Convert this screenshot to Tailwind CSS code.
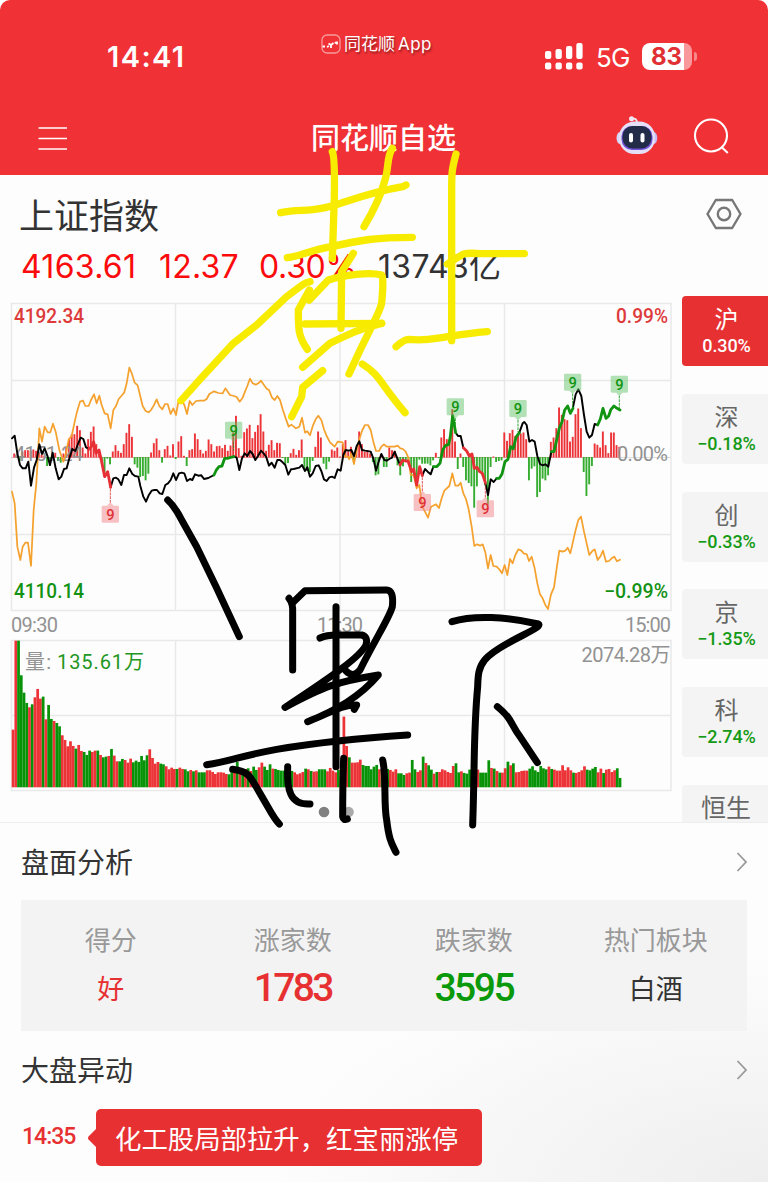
<!DOCTYPE html>
<html lang="zh-CN">
<head>
  <meta charset="UTF-8">
  <meta name="viewport" content="width=device-width, initial-scale=1.0">
  <title>同花顺自选</title>
  <script src="https://cdn.jsdelivr.net/npm/@tailwindcss/browser@4"></script>
</head>
<body class="bg-white font-['Inter','Noto_Sans_CJK_SC',sans-serif] text-[#333]">
  <div class="relative w-[768px] h-[1182px] overflow-hidden bg-[#fdfdfd] flex flex-col rounded-t-[10px]">

    <!-- 顶部 -->
    <header class="h-[175px] shrink-0 bg-[#f03136] text-white flex flex-col">
      <div class="h-[100px] flex items-start">
        <div class="w-[213px] ml-[107px] mt-[39px] text-[29px] leading-9 font-semibold tracking-[1.4px]">14:41</div>
        <div class="flex items-center mt-[32px] h-6 w-[224px]">
          <svg class="w-5 h-5 mr-[3px] ml-px" viewBox="0 0 20 20" fill="none">
            <rect x="1" y="1" width="18" height="18" rx="5" stroke="#f79a9c" stroke-width="1.3"/>
            <path d="M1.500 12.500h2.500M6 13l2-1M7.500 9.500l2.500 1.500L12.500 9M10 11v3M14 9.500l1-1.500M16 7.500v3" stroke="#fff" stroke-width="1.800"/>
          </svg>
          <span class="text-[17px] leading-6 whitespace-nowrap [text-shadow:1px_2px_2px_#0006]">同花顺<span class="ml-[3px] tracking-[0.4px]">App</span></span>
        </div>
        <svg class="w-[39px] h-[27px] mt-[43px]" viewBox="0 0 39 27" fill="#fff">
          <rect x="1" y="8" width="6.300" height="8" rx="2"/><rect x="11.500" y="6" width="6.300" height="10" rx="2"/><rect x="22" y="3" width="6.300" height="13" rx="2"/><rect x="32.300" y="0" width="6.300" height="16" rx="2"/>
          <rect x="1" y="19.500" width="6.300" height="7" rx="2"/><rect x="11.500" y="19.500" width="6.300" height="7" rx="2"/><rect x="22" y="19.500" width="6.300" height="7" rx="2"/><rect x="32.300" y="19.500" width="6.300" height="7" rx="2"/>
        </svg>
        <div class="w-[46px] ml-[13px] mt-[42px] text-[26px] leading-8 tracking-[-0.8px]">5G</div>
        <div class="mt-[43px] w-[50px] h-[27px] rounded-[8px] bg-linear-to-r from-white from-[84%] to-[#f8989a] to-[84%] text-[#e03034] font-bold text-[24px] leading-[27px] pl-[9px] whitespace-nowrap">83</div>
        <div class="w-[3px] h-[9px] mt-[52px] ml-[2px] rounded-r-full bg-[#f8888a]"></div>
      </div>
      <nav class="h-[75px] flex items-start">
        <svg class="w-[30px] h-6 ml-[38px] mt-[27px]" viewBox="0 0 30 24" stroke="#fff" stroke-width="1.700"><path d="M.5 1H29M.5 11.500H29M.5 22H29"/></svg>
        <h1 class="ml-[243px] mt-[17px] w-[304px] text-[29px] leading-[44px] font-medium">同花顺自选</h1>
        <svg class="w-11 h-10 mt-[15px]" viewBox="0 0 44 40">
          <path d="M22 8Q22 2.500 17 4" fill="none" stroke="#eee" stroke-width="1.700"/>
          <circle cx="16.500" cy="3.800" r="2.500" fill="#f4e6f5"/>
          <ellipse cx="5" cy="23" rx="3.500" ry="6" fill="#d3d8fa"/><ellipse cx="38.800" cy="23" rx="3.500" ry="6" fill="#c6bdf7"/>
          <rect x="4" y="6.500" width="36" height="32.500" rx="15.500" fill="#e5e0f8"/>
          <rect x="6.500" y="11" width="31" height="24" rx="10.500" fill="#7252d8"/>
          <rect x="7.500" y="11" width="29" height="22.500" rx="10" fill="#222c49"/>
          <rect x="14" y="18" width="4" height="9.500" rx="2" fill="#fff"/><rect x="25.500" y="18" width="4" height="9.500" rx="2" fill="#fff"/>
        </svg>
        <svg class="w-9 h-9 ml-[34px] mt-[18px]" viewBox="0 0 36 36" fill="none" stroke="#fff" stroke-width="2.100"><circle cx="18" cy="17.500" r="16"/><path d="M28.500 29L34.800 35"/></svg>
      </nav>
    </header>

    <!-- 指数 -->
    <section class="h-[121px] shrink-0 flex">
      <div class="w-[706px] pl-[19px] pt-[15px]">
        <h2 class="text-[35px] leading-[52px] text-[#333]">上证指数</h2>
        <div class="flex text-[32px] leading-[50px] whitespace-nowrap text-[#fb0b0b]">
          <span class="w-[138px] pl-[2px] tracking-[0.3px]">4163.61</span>
          <span class="w-[100px] pl-[2px] tracking-[0.2px]">12.37</span>
          <span class="w-[121px] pl-[2px] tracking-[-0.3px]">0.30%</span>
          <span class="text-[#333] tracking-[0.3px]">13743亿</span>
        </div>
      </div>
      <svg class="w-9 h-9 mt-[21px]" viewBox="0 0 36 36" fill="none" stroke="#777" stroke-width="2.400"><path d="M9.800 4h16.400L34.500 18 26.200 32H9.800L1.500 18z" stroke-linejoin="round"/><circle cx="18" cy="18" r="6.200"/></svg>
    </section>

    <!-- 分时图和板块切换 -->
    <section class="h-[527px] shrink-0 flex overflow-hidden border-b border-[#eee]">
      <svg class="w-[682px] h-[527px] shrink-0 font-['Roboto','Noto_Sans_CJK_SC',sans-serif]" viewBox="0 296 682 527" fill="none">
        <g stroke="#e9e9e9" stroke-width="1.500">
          <rect x="11.500" y="303.500" width="659.500" height="307"/>
          <path d="M11.500 380.500H671M11.500 534.500H671M175.500 303.500V610M340 303.500V610M504.500 303.500V610"/>
          <rect x="11.500" y="640.500" width="659.500" height="150"/>
          <path d="M11.500 715.500H671M175.500 640V790M340 640V790M504.500 640V790"/>
        </g>
        <path d="M11.500 457.500H620" stroke="#e4b4b4" stroke-width="1"/>
        <path d="M620 457.500H671" stroke="#ddd" stroke-width="1"/>
        <g id="volumeBars"></g>
        <g id="flowBars"></g>

        <g font-size="19.500" font-weight="500">
          <text x="14" y="323" fill="#dd3b3b" textLength="70" lengthAdjust="spacingAndGlyphs">4192.34</text>
          <text x="616" y="323" fill="#dd3b3b" textLength="52" lengthAdjust="spacingAndGlyphs">0.99%</text>
          <text x="14" y="598" fill="#149214" textLength="70" lengthAdjust="spacingAndGlyphs">4110.14</text>
          <text x="604" y="598" fill="#149214" textLength="64" lengthAdjust="spacingAndGlyphs">−0.99%</text>
        </g>
        <g font-size="20" fill="#929292">
          <text x="14" y="460.500" textLength="69">4151.24</text>
          <text x="617" y="461" textLength="51">0.00%</text>
          <text x="11" y="631.500" textLength="47">09:30</text>
          <text x="317" y="631.500" textLength="46">11:30</text>
          <text x="625" y="631.500" textLength="46">15:00</text>
          <text x="581.500" y="662" textLength="89">2074.28万</text>
          <text x="25" y="669" textLength="26">量:</text>
          <text x="57" y="669" fill="#229622" textLength="87">135.61万</text>
        </g>

        <!-- 曲线，单位为 1/3 像素 -->
        <g transform="translate(0 350) scale(.33333)" stroke-linejoin="round" stroke-linecap="round">
          <polyline stroke="#f5a12e" stroke-width="5.200" points="36,425 44,460 52,590 61,630 68,590 76,578 84,578 93,648 101,480 109,400 113,330 118,235 126,275 134,230 143,247 151,247 159,221 167,245 178,300 190,335 198,310 206,268 215,258 223,220 231,185 240,155 249,152 256,168 266,168 273,150 282,133 290,160 298,137 305,165 314,190 323,193 332,235 340,180 348,168 356,147 364,138 373,127 380,100 388,53 396,72 404,98 413,106 420,135 428,168 437,183 446,187 453,180 461,167 470,148 478,168 487,178 495,162 503,162 512,192 520,175 528,195 536,150 545,150 553,165 561,192 569,153 577,165 588,153 600,152 612,152 620,147 628,132 642,124 655,129 668,130 676,115 690,135 702,138 710,141 719,155 728,143 735,125 742,108 750,86 758,100 767,104 775,100 783,92 792,105 800,116 807,120 816,143 824,150 832,138 840,150 848,178 857,205 866,230 874,224 888,235 898,230 906,203 915,248 922,244 930,256 939,226 947,208 955,197 964,210 972,238 980,258 990,277 1004,290 1013,275 1028,277 1036,320 1044,320 1048,328 1054,310 1062,342 1070,300 1078,268 1087,240 1095,225 1104,225 1112,240 1120,275 1128,303 1137,303 1144,290 1152,283 1160,290 1184,290 1193,287 1201,295 1209,297 1217,305 1226,325 1232,375 1241,375 1250,415 1258,405 1267,470 1276,487 1284,503 1293,470 1308,463 1317,474 1325,445 1333,422 1348,408 1357,370 1366,407 1375,407 1382,398 1390,430 1398,447 1406,478 1415,530 1423,588 1431,583 1440,587 1448,583 1456,607 1464,655 1472,615 1480,648 1490,650 1498,658 1506,670 1514,645 1522,675 1530,627 1538,640 1546,615 1555,598 1564,602 1572,611 1580,612 1587,633 1595,620 1604,655 1612,700 1620,733 1628,745 1636,765 1644,777 1653,733 1662,712 1670,655 1678,602 1687,605 1696,602 1703,593 1711,610 1719,575 1727,540 1735,510 1743,500 1752,545 1760,580 1768,615 1777,603 1784,598 1793,630 1802,618 1809,602 1818,635 1827,633 1835,625 1843,620 1851,634 1860,629"/>
          <g stroke="#000" stroke-width="5.800">
            <polyline points="36,265 44,257 52,310 60,345 68,355 77,355 85,335 93,407 102,353 110,330 118,283 126,312 134,295 143,320 150,345 158,308 167,355 176,388 184,380 192,357 200,355 208,325 217,297 226,303 234,282 242,263 250,267 258,292 266,298"/>
            <polyline points="332,412 340,385 348,383 355,388 364,405 372,375 380,375 388,355 397,372 405,378 415,380 421,408 430,440 438,455 446,436 455,422 463,420 471,420 479,430 487,432 496,405 504,400 512,390 520,370 528,390 537,370 545,368 553,370 561,393 570,387 577,390 585,373 595,377 604,376 612,387 625,384 642,375"/>
            <polyline points="702,320 710,323 718,360 726,325 734,310 742,318 750,303 758,312 766,330 774,318 783,302 791,310 799,322 807,347 815,338 824,353 832,330 840,330 848,337 856,345 865,374 873,358 881,357 898,353 906,345 915,363 922,352 930,380 938,370 947,348 956,346 964,363 972,388 980,393 988,382 996,380 1004,384 1013,358 1022,362 1030,315 1037,300 1045,302 1054,300 1062,318 1070,288 1078,274 1086,300 1095,302 1112,305 1120,325 1128,362 1136,335 1144,312 1153,330 1160,332 1168,327 1176,323 1184,305 1192,325 1200,345"/>
            <polyline points="1267,377 1275,357 1283,365 1292,373 1300,350"/>
            <polyline points="1367,248 1374,258 1382,258 1390,293"/>
            <polyline points="1456,398 1464,435 1472,388 1481,396 1490,385"/>
            <polyline points="1558,248 1568,220 1573,216 1580,225 1588,275 1596,270 1604,275 1612,318 1620,342 1628,346 1636,343 1645,350 1654,305"/>
            <polyline points="1719,172 1727,133 1735,118 1744,138 1752,195 1760,245 1768,263 1776,255 1784,222 1793,225"/>
          </g>
          <g stroke="#e63035" stroke-width="8.500">
            <polyline points="266,298 274,290 281,275 288,310 297,300 305,335 314,380 323,365 332,412"/>
            <polyline points="1200,345 1208,330 1216,333 1224,333 1230,350 1235,365 1241,357 1250,405 1259,350 1267,377"/>
            <polyline points="1390,293 1400,303 1408,318 1416,312 1423,355 1431,352 1439,365 1447,370 1456,398"/>
          </g>
          <g stroke="#119411" stroke-width="8.500">
            <polyline points="642,375 649,360 657,350 666,348 674,325 682,325 692,322 702,320"/>
            <polyline points="1300,350 1310,350 1320,340 1328,300 1336,287 1346,283 1351,260 1358,197 1367,248"/>
            <polyline points="1490,385 1498,385 1506,372 1515,335 1524,328 1532,290 1540,296 1548,262 1558,248"/>
            <polyline points="1654,305 1662,305 1670,270 1678,235 1686,215 1694,180 1703,168 1711,190 1719,175"/>
            <polyline points="1793,225 1801,207 1809,175 1818,205 1826,198 1833,178 1842,168 1851,175 1860,180"/>
          </g>
          <g id="signals" font-size="44" font-weight="500" text-anchor="middle"></g>
        </g>

        <circle cx="324" cy="812" r="5.300" fill="#818181"/>
        <circle cx="348.500" cy="812" r="5.300" fill="#aaa"/>
      </svg>

      <aside class="flex-1 flex flex-col gap-[27.8px] text-center">
        <div class="h-[70px] shrink-0 rounded-l-[4px] bg-[#e73031] text-white pt-[5px] pl-[3px]"><div class="text-[24px] leading-[38px]">沪</div><div class="font-['Roboto'] font-medium text-[18px] leading-[13px] -tracking-[0.1px]">0.30%</div></div>
        <div class="h-[70px] shrink-0 rounded-l-[4px] bg-[#f4f4f4] text-[#666] pt-[5px] pl-[3px]"><div class="text-[24px] leading-[38px]">深</div><div class="font-['Roboto'] font-medium text-[18px] leading-[13px] -tracking-[0.1px] text-[#149a14]">−0.18%</div></div>
        <div class="h-[70px] shrink-0 rounded-l-[4px] bg-[#f4f4f4] text-[#666] pt-[5px] pl-[3px]"><div class="text-[24px] leading-[38px]">创</div><div class="font-['Roboto'] font-medium text-[18px] leading-[13px] -tracking-[0.1px] text-[#149a14]">−0.33%</div></div>
        <div class="h-[70px] shrink-0 rounded-l-[4px] bg-[#f4f4f4] text-[#666] pt-[5px] pl-[3px]"><div class="text-[24px] leading-[38px]">京</div><div class="font-['Roboto'] font-medium text-[18px] leading-[13px] -tracking-[0.1px] text-[#149a14]">−1.35%</div></div>
        <div class="h-[70px] shrink-0 rounded-l-[4px] bg-[#f4f4f4] text-[#666] pt-[5px] pl-[3px]"><div class="text-[24px] leading-[38px]">科</div><div class="font-['Roboto'] font-medium text-[18px] leading-[13px] -tracking-[0.1px] text-[#149a14]">−2.74%</div></div>
        <div class="h-[70px] shrink-0 rounded-l-[4px] bg-[#f4f4f4] text-[#666] pt-[4px] pl-[2px]"><div class="text-[25px] leading-[38px]">恒生</div></div>
      </aside>
    </section>

    <section class="flex-1 bg-[radial-gradient(ellipse_at_100%_100%,#eeeeee_0%,#fdfdfd_45%)]">
      <!-- 盘面分析 -->
      <div class="h-[77px] px-[21px] flex items-center justify-between">
        <h3 class="text-[28px] pt-0.5">盘面分析</h3>
        <svg class="w-3 h-5" viewBox="0 0 12 20" fill="none" stroke="#999" stroke-width="1.800"><path d="M2.500 1L11 10 2.500 19"/></svg>
      </div>
      <div class="mx-[21px] h-[131px] bg-[#f3f3f3] grid grid-cols-4 text-center">
        <div class="pt-[21px]"><div class="text-[26px] leading-10 text-[#999] pr-0.5">得分</div><div class="text-[27px] leading-[58px] text-[#e73031] pr-0.5">好</div></div>
        <div class="pt-[21px] pr-px"><div class="text-[26px] leading-10 text-[#999]">涨家数</div><div class="font-['Roboto'] font-medium text-[39px] leading-[54px] tracking-[-2.700px] text-[#e73031]">1783</div></div>
        <div class="pt-[21px] pr-[2px]"><div class="text-[26px] leading-10 text-[#999]">跌家数</div><div class="font-['Roboto'] font-medium text-[39px] leading-[54px] tracking-[-2.500px] text-[#0a990a]">3595</div></div>
        <div class="pt-[21px] pr-px"><div class="text-[26px] leading-10 text-[#999]">热门板块</div><div class="text-[27px] leading-[58px]">白酒</div></div>
      </div>

      <!-- 大盘异动 -->
      <div class="h-[78px] px-[21px] flex items-center justify-between">
        <h3 class="text-[28px] pt-0.5">大盘异动</h3>
        <svg class="w-3 h-5" viewBox="0 0 12 20" fill="none" stroke="#999" stroke-width="1.800"><path d="M2.500 1L11 10 2.500 19"/></svg>
      </div>
      <div class="flex items-center h-[57px] pl-[22px]">
        <span class="w-[66px] font-['Roboto'] font-medium text-[23px] text-[#e73031] tracking-[-1px]">14:35</span>
        <svg class="w-[8px] h-[18px]" viewBox="0 0 8 18"><path d="M8 0V18L0.500 10.500Q-.5 9 .5 7.500z" fill="#e73031"/></svg>
        <div class="w-[386px] h-[57px] rounded-[5px] bg-[#e73031] text-white pl-[19px] text-[26.400px] leading-[61px] whitespace-nowrap">化工股局部拉升，红宝丽涨停</div>
      </div>
    </section>

    <!-- 手写标注 -->
    <svg class="absolute inset-0 w-[768px] h-[1182px] pointer-events-none" viewBox="0 0 768 1182" fill="none" stroke-linecap="round" stroke-linejoin="round">
      <g transform="translate(260 130) scale(.33333)" stroke="#f7ec00" stroke-width="22">
        <path d="M217 65Q225 80 223 200L217 385"/>
        <path d="M397 55C380 80 387 110 375 150C362 200 330 260 312 290"/>
        <path d="M62 248C120 235 150 248 215 228C290 205 340 185 428 170L438 165"/>
        <path d="M82 383C120 380 150 360 215 350C300 330 350 322 457 322"/>
        <path d="M280 370L245 425L243 595"/>
        <path d="M-237 812L-180 748L-80 640L-10 585L80 500L120 470Q138 457 150 455"/>
        <path d="M148 510L205 450C250 435 330 425 365 435Q372 440 365 520C355 560 340 570 267 732"/>
        <path d="M148 480L115 540C115 600 115 620 142 658"/>
        <path d="M135 582L365 580"/>
        <path d="M128 712L210 640C260 615 300 595 365 580"/>
        <path d="M188 722L128 772L125 800L95 860"/>
        <path d="M307 702C360 735 360 760 435 848"/>
        <path d="M588 72C575 120 575 130 575 180L575 632"/>
        <path d="M562 402L610 372Q630 368 660 371L793 371"/>
        <path d="M408 650Q430 630 445 628C520 635 560 615 682 605"/>
      </g>
      <g transform="translate(190 570) scale(.33333)" stroke="#000" stroke-width="21">
        <path d="M-67 -210Q-45 -190 -25 -150L20 -70L80 54L148 200"/>
        <path d="M297 85Q310 100 308 130L308 300"/>
        <path d="M308 98L345 62L590 60Q612 60 607 110C600 140 560 200 510 300Q490 325 468 303"/>
        <path d="M438 110L438 590"/>
        <path d="M390 204Q410 195 440 195L515 195Q535 200 528 225C510 260 440 310 285 412C400 350 440 335 565 315C510 380 440 420 353 455C420 430 450 405 500 405L493 418"/>
        <path d="M50 584C120 575 140 560 260 538C380 518 500 505 653 495"/>
        <path d="M128 598C180 605 180 620 210 670C240 720 250 745 268 762"/>
        <path d="M293 590C290 660 300 705 360 702"/>
        <path d="M461 565C458 640 458 700 458 740Q460 752 472 747"/>
        <path d="M578 570C590 620 580 700 590 750C597 810 605 820 618 847"/>
      </g>
      <g transform="translate(420 590) scale(.33333)" stroke="#000" stroke-width="21">
        <path d="M96 95C160 75 260 80 355 102Q365 108 310 135C180 200 175 220 173 290C160 430 165 500 158 705"/>
        <path d="M232 350C280 390 270 400 300 440L352 518"/>
      </g>
    </svg>
  </div>

  <script>
    const NS = 'http://www.w3.org/2000/svg';
    const RED = '#ec3337';
    const GREEN = '#079207';

    // 正数为红，负数为绿
    const volume = [
      173,440,-440,-336,-284,-253,240,-249,270,295,266,-272,204,-247,-205,199,-193,-183,156,142,
      123,138,124,-116,127,109,-106,-97,-110,106,110,-110,97,-90,-92,94,-115,95,78,-78,
      -85,82,74,86,-75,-80,-76,-94,-81,-96,114,88,71,76,-71,-69,63,54,59,55,
      -55,59,55,-54,-48,52,-48,51,-45,-45,-45,51,51,46,40,45,45,44,40,-39,
      -45,45,-76,52,-55,55,-57,49,-62,-52,60,74,-62,-52,-69,56,-55,-52,-50,-50,
      52,-54,-49,45,39,42,46,-56,54,-49,47,48,-54,-54,-54,48,58,50,45,-52,
      62,212,124,-90,74,74,75,83,-67,-64,-64,-54,-62,-67,54,-54,55,-55,52,47,
      54,-42,-42,-37,42,44,-82,-54,46,51,-92,73,-66,-53,41,-46,46,54,51,46,
      43,64,-72,-45,48,-43,-41,-53,53,54,53,-44,-44,-44,-81,58,-56,49,-44,44,
      57,-77,66,-72,45,46,49,50,50,-56,-63,-51,-46,-64,-57,-54,62,-55,53,50,
      50,66,51,60,51,-44,43,46,51,63,-53,-51,-56,-61,45,56,-43,53,55,46,51,-57,-28
    ];
    const flow = [
      0,12,3,-12,18,22,22,20,24,20,15,8,5,-27,-27,0,14,-12,-17,12,
      30,55,70,70,95,82,30,12,55,77,93,40,25,-20,-45,-5,-22,18,37,20,
      14,40,74,100,62,-22,-32,-60,-57,-70,-50,15,43,57,22,-17,25,35,6,40,
      -6,48,64,5,-27,22,25,72,55,23,12,20,54,40,18,34,35,28,38,20,
      36,75,125,28,5,76,87,98,58,77,97,130,78,20,38,52,22,44,43,-3,
      -22,-18,13,26,8,22,54,-35,-42,-45,-12,32,78,60,-20,-37,-14,24,20,30,
      3,40,52,18,32,-8,30,78,40,17,22,12,-15,-55,-52,10,-30,-30,30,22,
      20,-25,-55,-28,-10,-15,-75,-60,-80,-8,-20,-20,-20,-25,-10,14,-3,60,85,55,
      50,145,48,-36,12,-30,-70,-78,-88,-152,-88,-45,-55,-85,-145,-30,3,-15,-12,-10,
      75,50,73,83,65,68,72,75,55,-70,-35,-28,-120,-105,-65,-70,-55,47,60,88,
      150,128,115,112,48,62,130,147,88,-45,-117,-82,-27,42,38,30,78,37,13,75,75,37,32
    ];

    function add(parent, tag, attrs, text) {
      const el = document.createElementNS(NS, tag);
      for (const key in attrs) el.setAttribute(key, attrs[key]);
      if (text) el.textContent = text;
      parent.appendChild(el);
    }

    // 成交量
    const volumeBars = document.getElementById('volumeBars');
    volume.forEach((v, i) => {
      const h = Math.abs(v) / 3;
      add(volumeBars, 'rect', { x: 11.7 + i * 2.734, y: 787.3 - h, width: 2.734, height: h, fill: v > 0 ? RED : GREEN });
    });

    // 零轴上下的红绿柱
    const flowBars = document.getElementById('flowBars');
    flow.forEach((v, i) => {
      const h = Math.abs(v) / 3;
      add(flowBars, 'rect', { x: 10.5 + i * 2.738, y: v > 0 ? 457.5 - h : 457, width: 1.9, height: h, fill: v > 0 ? RED : '#36ad30' });
    });

    // 九转信号: x, y, 引线终点, 是否绿色
    const signals = [
      [331, 467, 415, 0], [701, 215, 300, 1], [1267, 432, 380, 0], [1366, 145, 245, 1],
      [1456, 451, 400, 0], [1554, 150, 245, 1], [1718, 71, 170, 1], [1858, 77, 178, 1]
    ];
    const signalGroup = document.getElementById('signals');
    signals.forEach(([x, y, end, up]) => {
      const fill = up ? '#5dc06377' : '#f18a8e88';
      const color = up ? '#119411' : '#e03035';
      const edge = up ? y + 51 : y;
      const tip = up ? edge + 10 : edge - 10;
      add(signalGroup, 'path', { d: `M${x} ${tip}V${end}`, stroke: color, 'stroke-width': 2.5, 'stroke-dasharray': '6 5' });
      add(signalGroup, 'path', { d: `M${x - 10} ${edge}L${x} ${tip}L${x + 10} ${edge}z`, fill });
      add(signalGroup, 'rect', { x: x - 26, y, width: 52, height: 51, rx: 4, fill });
      add(signalGroup, 'text', { x, y: y + 42, fill: color }, '9');
    });
  </script>
</body>
</html>
